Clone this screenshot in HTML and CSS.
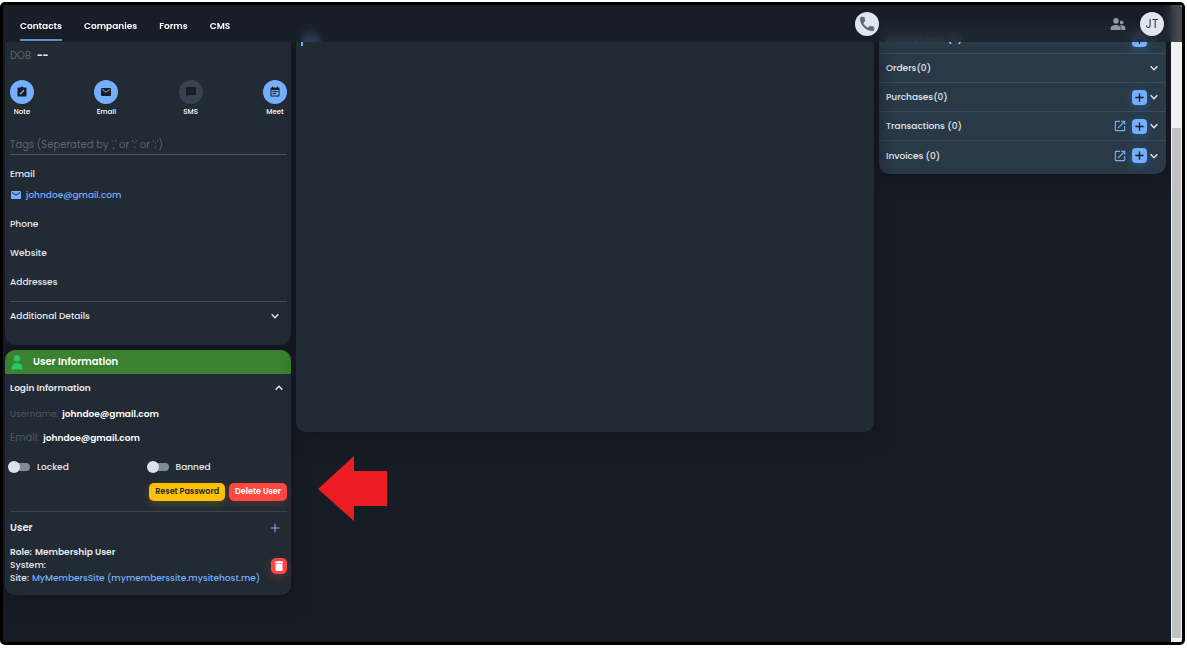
FILE: index.html
```html
<!DOCTYPE html>
<html lang="en">
<head>
    <meta charset="UTF-8">
    <meta name="viewport" content="width=device-width, initial-scale=1.0">
    <title>Contacts</title>
    <link rel="stylesheet" href="styles.css">
</head>
<body>
    <svg class="sprite" aria-hidden="true">
        <symbol id="chevron-down" viewBox="0 0 24 24"><path d="M4 8l8 8 8-8" fill="none" stroke="currentColor" stroke-width="3.500"/></symbol>
        <symbol id="chevron-up" viewBox="0 0 24 24"><path d="M4 16l8-8 8 8" fill="none" stroke="currentColor" stroke-width="3.500"/></symbol>
        <symbol id="plus" viewBox="0 0 24 24"><path d="M12 3v18M3 12h18" fill="none" stroke="currentColor" stroke-width="3"/></symbol>
        <symbol id="mail" viewBox="0 0 24 24"><path d="M20 4H4a2 2 0 0 0-2 2v12c0 1.100.9 2 2 2h16a2 2 0 0 0 2-2V6a2 2 0 0 0-2-2zm0 4l-8 5-8-5V6l8 5 8-5z" fill="currentColor"/></symbol>
        <symbol id="open" viewBox="0 0 24 24"><path d="M19 19H5V5h7V3H5a2 2 0 0 0-2 2v14c0 1.100.9 2 2 2h14a2 2 0 0 0 2-2v-7h-2zM14 3v2h3.600l-9.800 9.800 1.400 1.400L19 6.400V10h2V3z" fill="currentColor"/></symbol>
    </svg>

    <div class="frame">
        <header class="topbar">
            <nav class="tabs">
                <a class="tab active" href="#">Contacts</a>
                <a class="tab" href="#">Companies</a>
                <a class="tab" href="#">Forms</a>
                <a class="tab" href="#">CMS</a>
            </nav>
            <button class="round-btn phone" aria-label="Call">
                <svg viewBox="0 0 24 24"><path d="M6.600 10.800c1.400 2.800 3.800 5.100 6.600 6.600l2.200-2.200c.3-.3.700-.4 1-.2 1.100.4 2.300.6 3.600.6.600 0 1 .4 1 1V20c0 .6-.4 1-1 1C10.600 21 3 13.400 3 4c0-.6.4-1 1-1h3.500c.6 0 1 .4 1 1 0 1.200.2 2.400.6 3.600.1.300 0 .7-.2 1z" fill="currentColor" stroke="currentColor"/></svg>
            </button>
            <button class="people" aria-label="Team">
                <svg viewBox="0 0 24 24"><path d="M17.500 12.500a2.800 2.800 0 1 0 0-5.600 2.800 2.800 0 0 0 0 5.600zM9 11.500a4.200 4.200 0 1 0 0-8.400 4.200 4.200 0 0 0 0 8.400zM17.500 14c-1 0-2 .2-3 .6 1.700 1.100 2.500 2.700 2.500 4.400v2h6v-3.500c0-2.200-3-3.500-5.500-3.500zM8.500 13.500c-3.500 0-7.500 1.500-7.500 4.500v3h15v-3c0-3-4-4.500-7.500-4.500z" fill="currentColor"/></svg>
            </button>
            <button class="round-btn avatar">JT</button>
        </header>

        <div class="body">
            <div class="columns">
                <aside class="left">
                    <section class="card contact">
                        <div class="dob"><span>DOB</span><b>--</b></div>

                        <div class="actions">
                            <button class="action">
                                <span class="circle"><svg viewBox="0 0 24 24"><path d="M19 3h-4.200a3 3 0 0 0-5.600 0H5a2 2 0 0 0-2 2v14c0 1.100.9 2 2 2h14a2 2 0 0 0 2-2V5a2 2 0 0 0-2-2z" fill="currentColor"/><path d="M8 16.500l8-8" stroke="#75aefb" stroke-width="3"/></svg></span>
                                Note
                            </button>
                            <button class="action">
                                <span class="circle"><svg><use href="#mail"/></svg></span>
                                Email
                            </button>
                            <button class="action" disabled>
                                <span class="circle"><svg viewBox="0 0 24 24"><path d="M20 2H4a2 2 0 0 0-2 2v18l4-4h14a2 2 0 0 0 2-2V4a2 2 0 0 0-2-2zM9 11H7V9h2zm4 0h-2V9h2zm4 0h-2V9h2z" fill="currentColor"/></svg></span>
                                SMS
                            </button>
                            <button class="action">
                                <span class="circle"><svg viewBox="0 0 24 24"><path d="M17 10H7v2h10zm2-7h-1V1h-2v2H8V1H6v2H5a2 2 0 0 0-2 2v14c0 1.100.9 2 2 2h14a2 2 0 0 0 2-2V5a2 2 0 0 0-2-2zm0 16H5V8h14zm-5-5H7v2h7z" fill="currentColor"/></svg></span>
                                Meet
                            </button>
                        </div>

                        <input class="tags" type="text" aria-label="Tags" placeholder="Tags (Seperated by ',' or ':' or ';')">

                        <div class="fields">
                            <div>
                                <p>Email</p>
                                <a class="mail-link" href="mailto:johndoe@gmail.com"><svg><use href="#mail"/></svg>johndoe@gmail.com</a>
                            </div>
                            <p>Phone</p>
                            <p>Website</p>
                            <p>Addresses</p>
                        </div>

                        <button class="toggle-row additional">Additional Details <svg><use href="#chevron-down"/></svg></button>
                    </section>

                    <section class="card user">
                        <h2 class="user-title">
                            <svg viewBox="0 0 24 30"><circle cx="12" cy="7" r="6.500" fill="#22c55e"/><path d="M1 29c0-9 4-13 11-13s11 4 11 13z" fill="#25c768"/></svg>
                            User Information
                        </h2>
                        <div class="user-body">
                            <button class="toggle-row login">Login Information <svg><use href="#chevron-up"/></svg></button>
                            <div class="pair"><span>Username:</span><b>johndoe@gmail.com</b></div>
                            <div class="pair"><span class="big">Email:</span><b>johndoe@gmail.com</b></div>

                            <div class="switches">
                                <label><input type="checkbox" class="switch">Locked</label>
                                <label><input type="checkbox" class="switch">Banned</label>
                            </div>
                            <div class="buttons">
                                <button class="btn reset">Reset Password</button>
                                <button class="btn delete">Delete User</button>
                            </div>

                            <div class="roles-head">
                                <h3>User</h3>
                                <button class="add-role" aria-label="Add role"><svg viewBox="0 0 24 24"><path d="M12 2v20M2 12h20" stroke="currentColor" stroke-width="2.500"/></svg></button>
                            </div>
                            <div class="role">
                                <div>
                                    <p class="strong">Role:<span>Membership User</span></p>
                                    <p>System:</p>
                                    <p>Site:<a href="#">MyMembersSite (mymemberssite.mysitehost.me)</a></p>
                                </div>
                                <button class="trash" aria-label="Delete role"><svg viewBox="0 0 24 24"><path d="M5 7h14v13a2 2 0 0 1-2 2H7a2 2 0 0 1-2-2zM4 3h4l1-1h6l1 1h4v3H4z" fill="currentColor"/></svg></button>
                            </div>
                        </div>
                        <svg class="pointer" viewBox="0 0 69 65"><path d="M0 33L36 0v15h33v35H36v15z" fill="#ed1c24"/></svg>
                    </section>
                </aside>

                <main class="card center"></main>

                <aside class="card records">
                    <div class="record"><span>Attachments (0)</span><button class="add" aria-label="Add attachment"><svg><use href="#plus"/></svg></button><svg class="chev"><use href="#chevron-down"/></svg></div>
                    <div class="record"><span>Orders(0)</span><svg class="chev"><use href="#chevron-down"/></svg></div>
                    <div class="record"><span>Purchases(0)</span><button class="add" aria-label="Add purchase"><svg><use href="#plus"/></svg></button><svg class="chev"><use href="#chevron-down"/></svg></div>
                    <div class="record"><span>Transactions (0)</span><a class="open" href="#" aria-label="Open transactions"><svg><use href="#open"/></svg></a><button class="add" aria-label="Add transaction"><svg><use href="#plus"/></svg></button><svg class="chev"><use href="#chevron-down"/></svg></div>
                    <div class="record"><span>Invoices (0)</span><a class="open" href="#" aria-label="Open invoices"><svg><use href="#open"/></svg></a><button class="add" aria-label="Add invoice"><svg><use href="#plus"/></svg></button><svg class="chev"><use href="#chevron-down"/></svg></div>
                </aside>
            </div>
            <div class="scrollbar"><div class="thumb"></div></div>
        </div>
    </div>
</body>
</html>
```
FILE: styles.css
```css
* {
    box-sizing: border-box;
    margin: 0;
    padding: 0;
}

body {
    background: white;
    padding: 2px 2px 5px 0;
    font-family: Poppins, Inter, sans-serif;
    font-size: 9px;
    line-height: 16px;
    font-weight: 500;
    color: #e4e8ee;
}

button {
    font: inherit;
    color: inherit;
    background: none;
    border: none;
    cursor: pointer;
}

a {
    color: #75aefb;
    text-decoration: none;
}

.sprite {
    display: none;
}

.frame {
    display: flex;
    flex-direction: column;
    min-height: calc(100vh - 7px);
    border: 3px solid black;
    border-radius: 5px;
    background: #161c23;
    overflow: hidden;
}

/* Top bar */
.topbar {
    position: relative;
    z-index: 2;
    display: flex;
    align-items: center;
    height: 37px;
    padding: 0 18px 0 17px;
    background: rgba(25, 31, 41, 0.8);
    backdrop-filter: blur(4px);
}

.tabs {
    display: flex;
    gap: 22px;
    margin-right: auto;
}

.tab {
    color: white;
    font-weight: 600;
    line-height: 26px;
    margin-top: 6px;
    border-bottom: 2px solid transparent;
}

.tab.active {
    border-color: #5f90d2;
}

.round-btn {
    width: 24px;
    height: 24px;
    border-radius: 50%;
    background: #e1e6ee;
    color: #343b45;
}

.round-btn svg {
    display: block;
    width: 18px;
    height: 18px;
    margin: auto;
    color: #5c6b7a;
}

.phone {
    margin-right: 231px;
}

.avatar {
    font-size: 12px;
    font-weight: 400;
}

.people {
    color: #8f98a5;
    margin-right: 14px;
}

.people svg {
    display: block;
    width: 16px;
    height: 16px;
}

/* Layout */
.body {
    display: flex;
    flex: 1;
}

.columns {
    flex: 1;
    display: grid;
    grid-template-columns: 286px 1fr 287px;
    gap: 5px;
    align-items: start;
    padding: 0 5px 0 2px;
}

.card {
    background: #222a34;
    border-radius: 0 0 10px 10px;
    box-shadow: 4px 8px 16px rgba(20, 20, 28, 0.7);
}

.left {
    display: flex;
    flex-direction: column;
    gap: 5px;
}

/* Contact card */
.contact {
    padding: 6px 4px 0 5px;
}

.dob {
    display: flex;
    gap: 6px;
    font-size: 10px;
    font-weight: 400;
    color: #5b6673;
}

.dob b {
    color: #e4e8ee;
}

.actions {
    display: flex;
    justify-content: space-between;
    margin-top: 16px;
}

.action {
    width: 24px;
    font-size: 7px;
    line-height: 16px;
    color: white;
}

.circle {
    display: flex;
    align-items: center;
    justify-content: center;
    height: 24px;
    border-radius: 50%;
    background: #75aefb;
    color: #161c23;
}

.circle svg {
    width: 12px;
    height: 12px;
}

.action:disabled .circle {
    background: #3a424c;
}

.tags {
    display: block;
    width: 100%;
    height: 20px;
    margin-top: 15px;
    background: none;
    border: none;
    border-bottom: 1px solid #4b565f;
    font: inherit;
    font-size: 10px;
    font-weight: 400;
    color: #e4e8ee;
}

.tags::placeholder {
    color: #5b6673;
}

.fields {
    display: flex;
    flex-direction: column;
    gap: 13px;
    margin: 11px 0;
}

.mail-link {
    display: flex;
    align-items: center;
    gap: 4px;
    margin-top: 5px;
}

.mail-link svg {
    width: 12px;
    height: 12px;
}

.toggle-row {
    display: flex;
    align-items: center;
    justify-content: space-between;
    width: 100%;
}

.toggle-row svg {
    width: 10px;
    height: 10px;
}

.additional {
    border-top: 1px solid #424c57;
    padding: 6px 7px 21px 0;
}

/* User card */
.user {
    position: relative;
    border-radius: 10px;
}

.user-title {
    display: flex;
    align-items: center;
    gap: 10px;
    padding: 0 6px;
    height: 24px;
    border-radius: 10px 10px 0 0;
    background: #3a8130;
    color: white;
    font-size: 10px;
    font-weight: 600;
}

.user-title svg {
    width: 12px;
    height: 15px;
}

.user-body {
    padding: 6px 4px 10px 5px;
}

.login {
    font-weight: 600;
    padding-right: 3px;
    margin-bottom: 10px;
}

.pair {
    display: flex;
    gap: 4px;
    margin-bottom: 8px;
    color: #4d5864;
    font-weight: 400;
}

.pair b {
    color: white;
    font-weight: 600;
}

.pair .big {
    font-size: 10px;
}

.switches {
    display: grid;
    grid-template-columns: 1fr 1fr;
    margin-top: 13px;
}

.switches label {
    display: flex;
    align-items: center;
    gap: 7px;
}

.switch {
    appearance: none;
    width: 20px;
    height: 8px;
    border-radius: 4px;
    background: #808b99;
}

.switch::before {
    content: "";
    display: block;
    width: 12px;
    height: 12px;
    margin: -2px;
    border-radius: 50%;
    background: #dce1ea;
}

.switch:checked::before {
    margin-left: 10px;
}

.buttons {
    display: flex;
    justify-content: flex-end;
    gap: 4px;
    margin-top: 8px;
}

.btn {
    height: 18px;
    padding: 0 6px;
    border-radius: 5px;
    font-size: 8px;
    font-weight: 600;
}

.reset {
    background: #ffc107;
    color: #222a34;
    box-shadow: 0 3px 8px rgba(255, 193, 7, 0.2);
}

.delete {
    background: #ff4842;
    color: white;
    box-shadow: 0 3px 8px rgba(255, 72, 66, 0.2);
}

.roles-head {
    display: flex;
    align-items: center;
    justify-content: space-between;
    margin-top: 10px;
    padding: 8px 7px 0 0;
    border-top: 1px solid #39444e;
}

.roles-head h3 {
    font-size: 10px;
    font-weight: 600;
}

.add-role svg {
    display: block;
    width: 10px;
    height: 10px;
    color: #75aefb;
}

.role {
    display: flex;
    align-items: center;
    justify-content: space-between;
    margin-top: 10px;
    line-height: 13px;
}

.role .strong {
    font-weight: 600;
}

.role span,
.role a {
    margin-left: 3px;
}

.trash {
    width: 16px;
    height: 16px;
    border-radius: 5px;
    background: #ff4842;
    color: white;
    box-shadow: 0 3px 8px rgba(255, 72, 66, 0.3);
}

.trash svg {
    display: block;
    width: 12px;
    height: 12px;
    margin: auto;
}

.pointer {
    position: absolute;
    left: calc(100% + 27px);
    top: 106px;
    width: 69px;
    height: 65px;
}

/* Center card */
.center {
    position: relative;
    min-height: 60vh;
}

.center::before {
    content: "";
    position: absolute;
    left: 5px;
    top: -10px;
    width: 20px;
    height: 10px;
    border-radius: 10px 10px 0 0;
    background: #75aefb;
}

.center::after {
    content: "";
    position: absolute;
    left: 5px;
    top: 0;
    width: 2px;
    height: 4px;
    background: #75aefb;
}

/* Records */
.records {
    margin-top: -17px;
    padding-bottom: 4px;
    background: #2a3947;
}

.record {
    display: flex;
    align-items: center;
    height: 29px;
    padding: 0 7px;
    border-bottom: 1px solid #3d4b59;
}

.record:last-child {
    border-bottom: none;
}

.record span {
    margin-right: auto;
}

.open svg {
    display: block;
    width: 14px;
    height: 14px;
    margin-right: 5px;
}

.add {
    width: 15px;
    height: 15px;
    margin-right: 2px;
    border-radius: 4px;
    background: #75aefb;
    color: #161c23;
    box-shadow: 0 2px 8px rgba(32, 130, 200, 0.5);
}

.add svg {
    display: block;
    width: 11px;
    height: 11px;
    margin: auto;
}

.chev {
    width: 10px;
    height: 10px;
}

/* Scrollbar */
.scrollbar {
    width: 11px;
    margin-top: -37px;
    padding: 123px 1px 4px;
    display: flex;
    background: #f1f1f1;
}

.thumb {
    flex: 1;
    background: #c1c1c1;
}
```
